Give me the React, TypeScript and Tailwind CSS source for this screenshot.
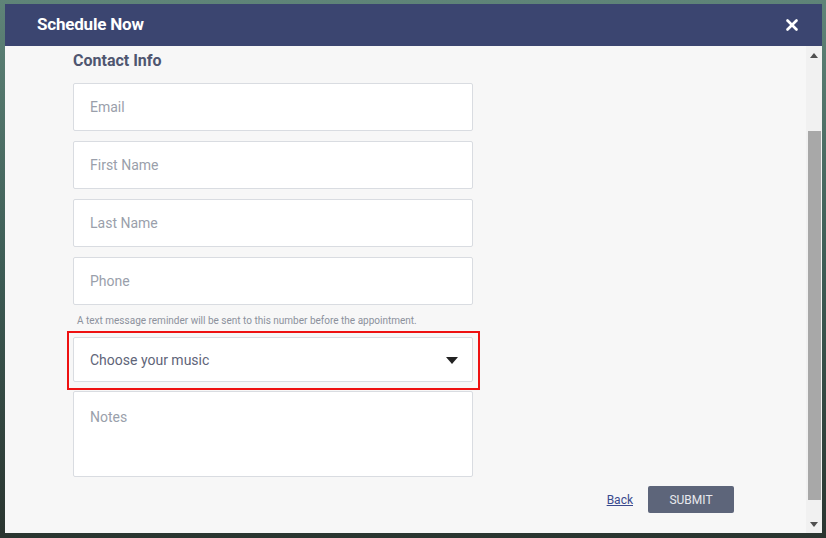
import { X } from "lucide-react";

const fields = ["Email", "First Name", "Last Name", "Phone"];

function TextField({ label }: { label: string }) {
  return (
    <div className="flex h-[48px] w-[400px] items-center rounded-[2px] border border-[#d9dce1] bg-white px-[16px] text-[14px] text-[#9a9fab]">
      {label}
    </div>
  );
}

export default function App() {
  return (
    <div
      className="h-[538px] w-[826px] overflow-hidden bg-gradient-to-b from-[#5f8478] via-[#3d5c55] to-[#2a3530] pb-[5px] pl-[5px] pr-[4px] pt-[4px]"
      style={{ fontFamily: "Roboto, 'Noto Sans', Arial, sans-serif" }}
    >
      <div className="flex h-full flex-col bg-[#f7f7f7]">
        <div className="flex h-[42px] shrink-0 items-center justify-between bg-[#3b4570] pl-[32px] pr-[21px]">
          <h1 className="text-[17px] font-bold tracking-[-0.2px] text-white">Schedule Now</h1>
          <X className="h-[18px] w-[18px] text-white" strokeWidth={3.5} />
        </div>

        <div className="flex min-h-0 flex-1">
          <div className="flex flex-1 flex-col pl-[68px] pr-[72px] pt-[5px]">
            <h2 className="text-[16px] font-bold leading-[20px] text-[#4f5670]">Contact Info</h2>

            <div className="mt-[12px] flex flex-col gap-[10px]">
              {fields.map((f) => (
                <TextField key={f} label={f} />
              ))}
            </div>

            <p className="mt-[10px] pl-[4px] text-[10px] leading-[12px] text-[#8c919c]">
              A text message reminder will be sent to this number before the appointment.
            </p>

            <div className="relative mt-[10px] w-[400px]">
              <div className="flex h-[45px] items-center justify-between rounded-[2px] border border-[#d9dce1] bg-white pl-[16px] pr-[16px] pt-[1px] text-[14px] text-[#5f6579]">
                <span>Choose your music</span>
                <svg width="12" height="7" viewBox="0 0 12 7" className="mr-[-2px]">
                  <path d="M0 0h12L6 7z" fill="#222" />
                </svg>
              </div>
              <div className="pointer-events-none absolute -left-[6px] -right-[7px] -top-[6px] -bottom-[8px] border-2 border-[#ee1111]" />
            </div>

            <div className="mt-[9px] h-[86px] w-[400px] rounded-[2px] border border-[#d9dce1] bg-white px-[16px] pt-[15px] text-[14px] leading-[20px] text-[#9a9fab]">
              Notes
            </div>

            <div className="mt-[9px] flex items-center justify-end gap-[15px]">
              <a href="#" className="text-[12px] text-[#3a4a8e] underline">
                Back
              </a>
              <button className="h-[27px] w-[86px] rounded-[2px] bg-[#5d657a] text-[12px] text-[#e8e9ee]">
                SUBMIT
              </button>
            </div>
          </div>

          <div className="flex w-[16px] shrink-0 flex-col items-center bg-[#f1f1f1]">
            <svg width="8" height="5" viewBox="0 0 8 5" className="mt-[7px]">
              <path d="M0 5h8L4 0z" fill="#505050" />
            </svg>
            <div className="mt-[73px] h-[369px] w-[13px] bg-[#a8a8a8]" />
            <div className="flex-1" />
            <svg width="8" height="5" viewBox="0 0 8 5" className="mb-[6px]">
              <path d="M0 0h8L4 5z" fill="#505050" />
            </svg>
          </div>
        </div>
      </div>
    </div>
  );
}
